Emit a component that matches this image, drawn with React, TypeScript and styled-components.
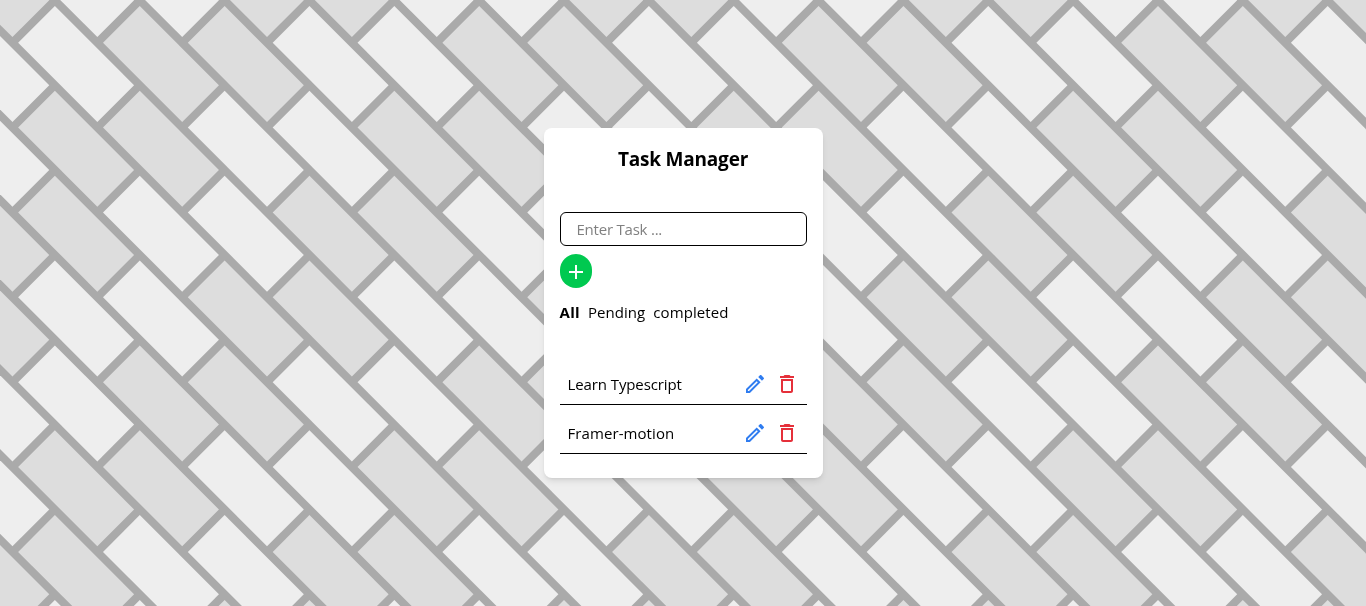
import React from "react";
import styled, { createGlobalStyle } from "styled-components";
import { MdAdd, MdDeleteOutline } from "react-icons/md";

const GlobalStyle = createGlobalStyle`
  *, *::before, *::after { box-sizing: border-box; }
  body {
    margin: 0;
    overflow: hidden;
    background: #aaa;
    font-family: "Segoe UI", "Open Sans", "Noto Sans", sans-serif;
    font-size: 15px;
    line-height: 24px;
    color: #000;
  }
`;

const Page = styled.main`
  display: flex;
  align-items: center;
  justify-content: center;
  height: 100vh;
`;

const Wall = styled.svg`
  position: fixed;
  inset: 0;
  width: 100%;
  height: 100%;
  z-index: -1;
`;

const Card = styled.section`
  display: flex;
  flex-direction: column;
  width: 279px;
  padding: 16px;
  border-radius: 8px;
  background: #fff;
  box-shadow: 0 4px 6px -1px rgba(0, 0, 0, 0.1), 0 2px 4px -2px rgba(0, 0, 0, 0.1);
`;

const Title = styled.h1`
  margin: 0 0 39px;
  padding-top: 1px;
  font-size: 19px;
  line-height: 28px;
  font-weight: 700;
  text-align: center;
  letter-spacing: -0.2px;
`;

const TaskForm = styled.form`
  display: flex;
  flex-direction: column;
  align-items: flex-start;
  gap: 8px;
`;

const TaskInput = styled.input`
  width: 100%;
  height: 34px;
  padding: 4px 16px;
  border: 1px solid #000;
  border-radius: 6px;
  outline: none;
  background: transparent;
  font: inherit;
  letter-spacing: -0.22px;
  &::placeholder { color: #808080; opacity: 1; }
`;

const AddButton = styled.button`
  display: flex;
  align-items: center;
  justify-content: center;
  width: 32px;
  height: 34px;
  padding: 2px 0 0;
  border: 0;
  border-radius: 17px;
  background: #00c950;
  color: #fff;
`;

const Filters = styled.nav`
  display: flex;
  gap: 8px;
  margin: 12px 0 40px;
`;

const Filter = styled.span<{ $active?: boolean; $tracking?: number }>`
  font-weight: ${(p) => (p.$active ? 700 : 400)};
  letter-spacing: ${(p) => p.$tracking ?? 0}px;
`;

const TaskList = styled.ul`
  margin: 0;
  padding: 0;
  list-style: none;
`;

const TaskRow = styled.li`
  display: flex;
  align-items: center;
  justify-content: space-between;
  height: 41px;
  margin-bottom: 8px;
  padding: 8px;
  border-bottom: 1px solid #000;
`;

const TaskName = styled.span<{ $tracking?: number }>`
  letter-spacing: ${(p) => p.$tracking ?? 0}px;
`;

const Actions = styled.div`
  display: flex;
  gap: 8px;
`;

const IconButton = styled.button<{ $color: string }>`
  display: flex;
  padding: 0;
  border: 0;
  background: none;
  color: ${(p) => p.$color};
`;

const PencilIcon = () => (
  <svg width={24} height={24} viewBox="0 0 24 24" fill="currentColor" aria-hidden="true">
    <path
      fillRule="evenodd"
      d="M3 17.1V21h3.9L17.6 10.3l-3.9-3.9L3 17.1zM6 19.1H4.9V18l8.8-8.8 1.1 1.1L6 19.1z"
    />
    <path d="M20.71 7.04a1 1 0 0 0 0-1.41l-2.34-2.34c-.2-.2-.45-.29-.71-.29s-.51.1-.7.29l-1.73 1.73 3.75 3.75 1.73-1.73z" />
  </svg>
);

// Running-bond brick wall turned by 45 degrees: bricks of 112x52 on a 120x60 pitch.
const PITCH = 60;
const bricks: { u: number; v: number; light: boolean }[] = [];
for (let row = -26; row <= 14; row++) {
  for (let col = -4; col <= 36; col++) {
    if ((row + col) % 2 !== 0) continue;
    const x = (PITCH * (col - row)) / Math.SQRT2;
    const y = (PITCH * (col + row)) / Math.SQRT2;
    if (x < -240 || x > 1400 || y < -240 || y > 640) continue;
    const shade = ((col % 4) + 4) % 4;
    bricks.push({ u: PITCH * col, v: PITCH * row, light: shade === 0 || shade === 3 });
  }
}

const BrickWall = () => (
  <Wall aria-hidden="true">
    <g transform="translate(54.9 6) rotate(45)">
      {bricks.map((b) => (
        <rect key={`${b.u}:${b.v}`} x={b.u} y={b.v} width={112} height={52} fill={b.light ? "#eee" : "#ddd"} />
      ))}
    </g>
  </Wall>
);

const tasks = [
  { name: "Learn Typescript", tracking: -0.1 },
  { name: "Framer-motion", tracking: 0.08 },
];

export default function App() {
  return (
    <Page>
      <GlobalStyle />
      <BrickWall />
      <Card>
        <Title>Task Manager</Title>
        <TaskForm onSubmit={(e) => e.preventDefault()}>
          <TaskInput placeholder="Enter Task ..." />
          <AddButton aria-label="Add">
            <MdAdd size={24} />
          </AddButton>
        </TaskForm>
        <Filters>
          <Filter $active $tracking={0.3}>All</Filter>
          <Filter $tracking={0.06}>Pending</Filter>
          <Filter $tracking={0.1}>completed</Filter>
        </Filters>
        <TaskList>
          {tasks.map((t) => (
            <TaskRow key={t.name}>
              <TaskName $tracking={t.tracking}>{t.name}</TaskName>
              <Actions>
                <IconButton $color="#2f7cf0" aria-label="Edit">
                  <PencilIcon />
                </IconButton>
                <IconButton $color="#e5303a" aria-label="Delete">
                  <MdDeleteOutline size={24} />
                </IconButton>
              </Actions>
            </TaskRow>
          ))}
        </TaskList>
      </Card>
    </Page>
  );
}
